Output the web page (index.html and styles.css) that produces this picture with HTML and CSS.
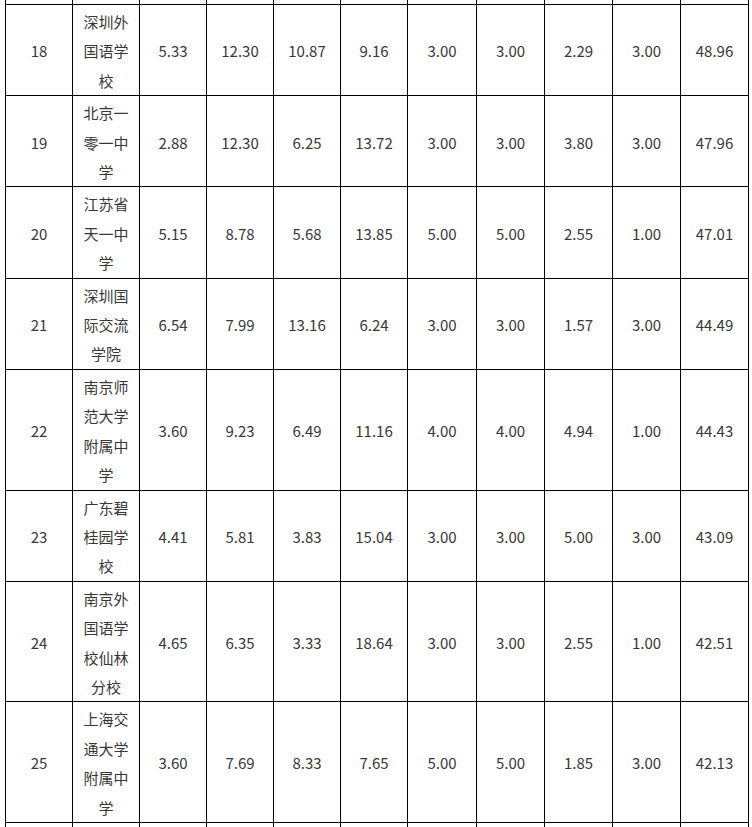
FILE: index.html
```html
<!DOCTYPE html>
<html lang="zh-CN">
<head>
<meta charset="utf-8">
<title>排名表</title>
<link rel="stylesheet" href="styles.css">
</head>
<body>
<table class="rank">
  <colgroup>
    <col class="c67"><col class="c67"><col class="c67"><col class="c67"><col class="c67"><col class="c67">
    <col class="c69"><col class="c68"><col class="c68"><col class="c68"><col class="c68">
  </colgroup>
  <tbody>
    <tr class="cut-top"><td></td><td></td><td></td><td></td><td></td><td></td><td></td><td></td><td></td><td></td><td></td></tr>
    <tr><td>18</td><td class="name">深圳外国语学校</td><td>5.33</td><td>12.30</td><td>10.87</td><td>9.16</td><td>3.00</td><td>3.00</td><td>2.29</td><td>3.00</td><td>48.96</td></tr>
    <tr><td>19</td><td class="name">北京一零一中学</td><td>2.88</td><td>12.30</td><td>6.25</td><td>13.72</td><td>3.00</td><td>3.00</td><td>3.80</td><td>3.00</td><td>47.96</td></tr>
    <tr><td>20</td><td class="name">江苏省天一中学</td><td>5.15</td><td>8.78</td><td>5.68</td><td>13.85</td><td>5.00</td><td>5.00</td><td>2.55</td><td>1.00</td><td>47.01</td></tr>
    <tr><td>21</td><td class="name">深圳国际交流学院</td><td>6.54</td><td>7.99</td><td>13.16</td><td>6.24</td><td>3.00</td><td>3.00</td><td>1.57</td><td>3.00</td><td>44.49</td></tr>
    <tr><td>22</td><td class="name">南京师范大学附属中学</td><td>3.60</td><td>9.23</td><td>6.49</td><td>11.16</td><td>4.00</td><td>4.00</td><td>4.94</td><td>1.00</td><td>44.43</td></tr>
    <tr><td>23</td><td class="name">广东碧桂园学校</td><td>4.41</td><td>5.81</td><td>3.83</td><td>15.04</td><td>3.00</td><td>3.00</td><td>5.00</td><td>3.00</td><td>43.09</td></tr>
    <tr><td>24</td><td class="name">南京外国语学校仙林分校</td><td>4.65</td><td>6.35</td><td>3.33</td><td>18.64</td><td>3.00</td><td>3.00</td><td>2.55</td><td>1.00</td><td>42.51</td></tr>
    <tr><td>25</td><td class="name">上海交通大学附属中学</td><td>3.60</td><td>7.69</td><td>8.33</td><td>7.65</td><td>5.00</td><td>5.00</td><td>1.85</td><td>3.00</td><td>42.13</td></tr>
    <tr class="cut-bottom"><td></td><td></td><td></td><td></td><td></td><td></td><td></td><td></td><td></td><td></td><td></td></tr>
  </tbody>
</table>
</body>
</html>
```
FILE: styles.css
```css
html {
  overflow: hidden;
  background: #ffffff;
}

body {
  margin: 0;
  background: #ffffff;
  font-family: "Noto Sans CJK SC", "Noto Sans", sans-serif;
  font-size: 15px;
  color: #383838;
}

.rank {
  margin-left: 5px;
  width: 744px;
  table-layout: fixed;
  border-collapse: collapse;
}

.c67 { width: 67px; }
.c68 { width: 68px; }
.c69 { width: 69px; }

.rank td {
  border: 1px solid #000000;
  padding: 2px 8px 0;
  line-height: 29.4px;
  text-align: center;
  vertical-align: middle;
}

.rank td.name {
  padding-left: 10px;
  padding-right: 10px;
  word-break: break-all;
}

.rank .cut-top td {
  height: 4px;
  padding: 0;
  line-height: 0;
  border-top: none;
}

.rank .cut-bottom td {
  height: 20px;
  padding: 0;
  line-height: 0;
}
```
